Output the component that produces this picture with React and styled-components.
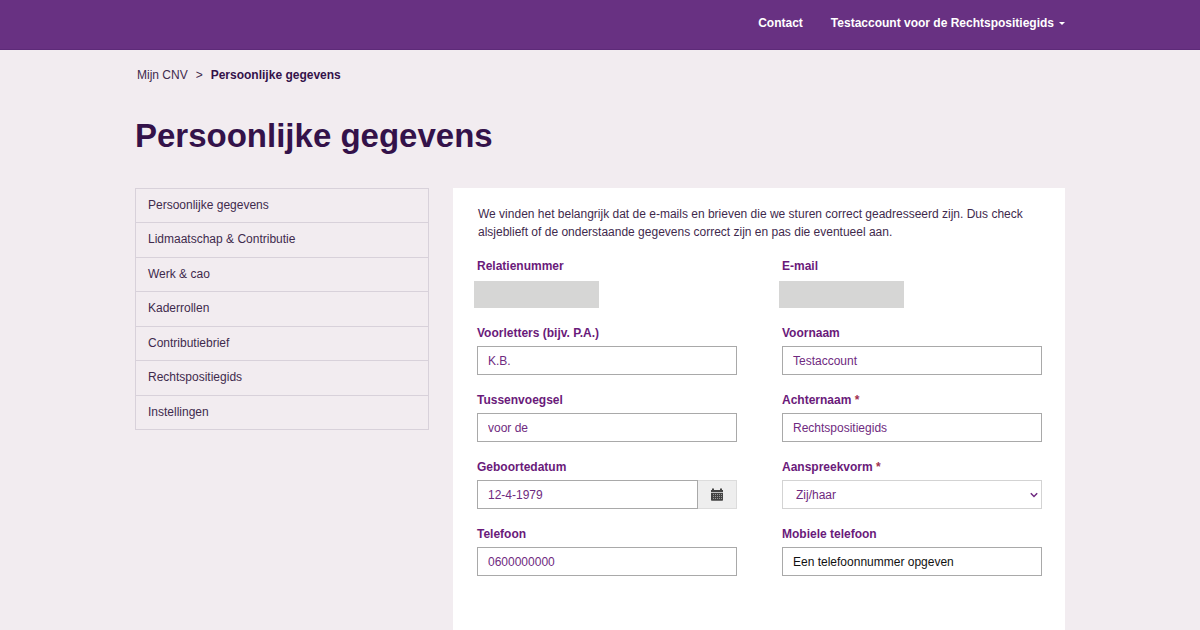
import React, { useState } from "react";
import styled, { createGlobalStyle, css } from "styled-components";

const color = {
  brand: "#683182",
  brandEdge: "#5d2a78",
  page: "#f2ecf0",
  heading: "#34124a",
  text: "#3f2a4d",
  field: "#6f2a80",
  label: "#6a1a7a",
  line: "#d8d1da",
  input: "#a9a9a9",
};

const GlobalStyle = createGlobalStyle`
  *, *::before, *::after { box-sizing: border-box; }
  body {
    margin: 0;
    background: ${color.page};
    color: ${color.text};
    font-family: "Liberation Sans", Arial, Helvetica, sans-serif;
    font-size: 12px;
    line-height: 18px;
  }
`;

const Page = styled.div`
  min-height: 100vh;
  display: flex;
  flex-direction: column;
`;

const container = css`
  width: 100%;
  max-width: 930px;
  margin: 0 auto;
`;

const TopBar = styled.header`
  background: ${color.brand};
  border-bottom: 1px solid ${color.brandEdge};
`;

const TopNav = styled.nav`
  ${container}
  display: flex;
  justify-content: flex-end;
  gap: 28px;
  padding: 14px 0 17px;
`;

const topItem = css`
  color: #fff;
  font: inherit;
  font-weight: bold;
  text-decoration: none;
`;

const TopLink = styled.a`
  ${topItem}
`;

const AccountButton = styled.button`
  ${topItem}
  display: flex;
  align-items: center;
  gap: 5px;
  padding: 0;
  border: 0;
  background: none;
  cursor: pointer;
`;

const Caret = styled.span`
  margin-top: 1px;
  border: 3px solid transparent;
  border-top-color: #fff;
  border-bottom: 0;
`;

const Main = styled.main`
  ${container}
  flex: 1;
  display: flex;
  flex-direction: column;
`;

const Breadcrumb = styled.nav`
  display: flex;
  gap: 8px;
  padding: 16px 2px 0;
`;

const CrumbLink = styled.a`
  color: ${color.text};
  text-decoration: none;
`;

const Current = styled.strong`
  color: ${color.heading};
`;

const Title = styled.h1`
  margin: 32px 0;
  color: ${color.heading};
  font-size: 33px;
  line-height: 40px;
`;

const Columns = styled.div`
  flex: 1;
  display: grid;
  grid-template-columns: 294px minmax(0, 1fr);
  gap: 24px;
`;

const Menu = styled.ul`
  align-self: start;
  min-height: 242px;
  margin: 0;
  padding: 0;
  display: flex;
  flex-direction: column;
  list-style: none;
  border: 1px solid ${color.line};
`;

const MenuItem = styled.li`
  flex: 1;
  display: flex;

  & + & {
    border-top: 1px solid ${color.line};
  }
`;

const MenuLink = styled.a`
  flex: 1;
  padding: 7px 12px;
  color: ${color.text};
  text-decoration: none;
`;

const Panel = styled.section`
  padding: 17px 23px 54px 24px;
  background: #fff;
`;

const Intro = styled.p`
  max-width: 560px;
  margin: 0 0 16px;
  padding: 0 1px;
`;

const Form = styled.form`
  display: grid;
  grid-template-columns: repeat(2, minmax(0, 1fr));
  gap: 16px 45px;
`;

const Field = styled.div`
  display: flex;
  flex-direction: column;
  gap: 4px;
`;

const Label = styled.label`
  color: ${color.label};
  font-weight: bold;
`;

const Required = styled.span`
  color: #a03050;
`;

const control = css`
  width: 100%;
  height: 29px;
  border: 1px solid ${color.input};
  border-radius: 0;
  background: #fff;
  color: ${color.field};
  font: inherit;
`;

const Input = styled.input`
  ${control}
  padding: 0 10px;

  &::placeholder {
    color: #111;
    opacity: 1;
  }
`;

const Masked = styled.input`
  width: 125px;
  height: 27px;
  margin: 2px -3px 0;
  padding: 0;
  border: 0;
  background: #d6d6d5;
`;

const SelectBox = styled.div`
  display: grid;
  align-items: center;

  & > * {
    grid-area: 1 / 1;
  }
`;

const Select = styled.select`
  ${control}
  appearance: none;
  padding: 0 20px 0 13px;
  border-color: #d3d3d3;
`;

const Chevron = styled.svg`
  justify-self: end;
  margin-right: 4px;
  pointer-events: none;
`;

const DateGroup = styled.div`
  display: flex;
`;

const CalendarButton = styled.button`
  flex: none;
  width: 39px;
  display: grid;
  place-items: center;
  padding: 0;
  border: 1px solid #dcdcdc;
  border-left: 0;
  background: #eee;
  color: #444;
`;

const CalendarIcon = () => (
  <svg width="12" height="13" viewBox="0 0 12 13" aria-hidden="true">
    <path fill="currentColor" d="M0 2h1V.5h2V2h6V.5h2V2h1v2H0z" />
    <path fill="currentColor" d="M0 4.700h12V12q0 .8-.8.8H.8Q0 12.800 0 12z" />
    <path
      fill="none"
      stroke="#999"
      strokeDasharray="1 1"
      d="M2 6.500h9M2 8.500h9M2 10.500h9"
    />
  </svg>
);

const menu = [
  "Persoonlijke gegevens",
  "Lidmaatschap & Contributie",
  "Werk & cao",
  "Kaderrollen",
  "Contributiebrief",
  "Rechtspositiegids",
  "Instellingen",
];

const fields = [
  { id: "relatienummer", label: "Relatienummer", kind: "masked" },
  { id: "email", label: "E-mail", kind: "masked" },
  { id: "voorletters", label: "Voorletters (bijv. P.A.)", value: "K.B." },
  { id: "voornaam", label: "Voornaam", value: "Testaccount" },
  { id: "tussenvoegsel", label: "Tussenvoegsel", value: "voor de" },
  { id: "achternaam", label: "Achternaam", value: "Rechtspositiegids", required: true },
  { id: "geboortedatum", label: "Geboortedatum", value: "12-4-1979", kind: "date" },
  { id: "aanspreekvorm", label: "Aanspreekvorm", value: "Zij/haar", kind: "select", required: true },
  { id: "telefoon", label: "Telefoon", value: "0600000000" },
  { id: "mobiel", label: "Mobiele telefoon", value: "", placeholder: "Een telefoonnummer opgeven" },
];

function Control({ field }) {
  const [value, setValue] = useState(field.value ?? "");
  const bind = {
    id: field.id,
    value,
    required: field.required,
    onChange: (event) => setValue(event.target.value),
  };
  switch (field.kind) {
    case "masked":
      return <Masked id={field.id} readOnly />;
    case "select":
      return (
        <SelectBox>
          <Select {...bind}>
            <option>Zij/haar</option>
          </Select>
          <Chevron width="8" height="6" viewBox="0 0 8 6" aria-hidden="true">
            <path
              d="M.8 1.200 4 4.500 7.200 1.200"
              fill="none"
              stroke={color.field}
              strokeWidth="1.500"
            />
          </Chevron>
        </SelectBox>
      );
    case "date":
      return (
        <DateGroup>
          <Input {...bind} />
          <CalendarButton type="button" aria-label="Kies een datum">
            <CalendarIcon />
          </CalendarButton>
        </DateGroup>
      );
    default:
      return <Input {...bind} placeholder={field.placeholder} />;
  }
}

export default function App() {
  return (
    <Page>
      <GlobalStyle />
      <TopBar>
        <TopNav>
          <TopLink href="#contact">Contact</TopLink>
          <AccountButton type="button">
            Testaccount voor de Rechtspositiegids
            <Caret />
          </AccountButton>
        </TopNav>
      </TopBar>
      <Main>
        <Breadcrumb>
          <CrumbLink href="#mijn-cnv">Mijn CNV</CrumbLink>
          <span>&gt;</span>
          <Current>Persoonlijke gegevens</Current>
        </Breadcrumb>
        <Title>Persoonlijke gegevens</Title>
        <Columns>
          <Menu>
            {menu.map((item) => (
              <MenuItem key={item}>
                <MenuLink href="#menu">{item}</MenuLink>
              </MenuItem>
            ))}
          </Menu>
          <Panel>
            <Intro>
              We vinden het belangrijk dat de e-mails en brieven die we sturen correct
              geadresseerd zijn. Dus check alsjeblieft of de onderstaande gegevens correct
              zijn en pas die eventueel aan.
            </Intro>
            <Form>
              {fields.map((field) => (
                <Field key={field.id}>
                  <Label htmlFor={field.id}>
                    {field.label}
                    {field.required && <Required> *</Required>}
                  </Label>
                  <Control field={field} />
                </Field>
              ))}
            </Form>
          </Panel>
        </Columns>
      </Main>
    </Page>
  );
}
